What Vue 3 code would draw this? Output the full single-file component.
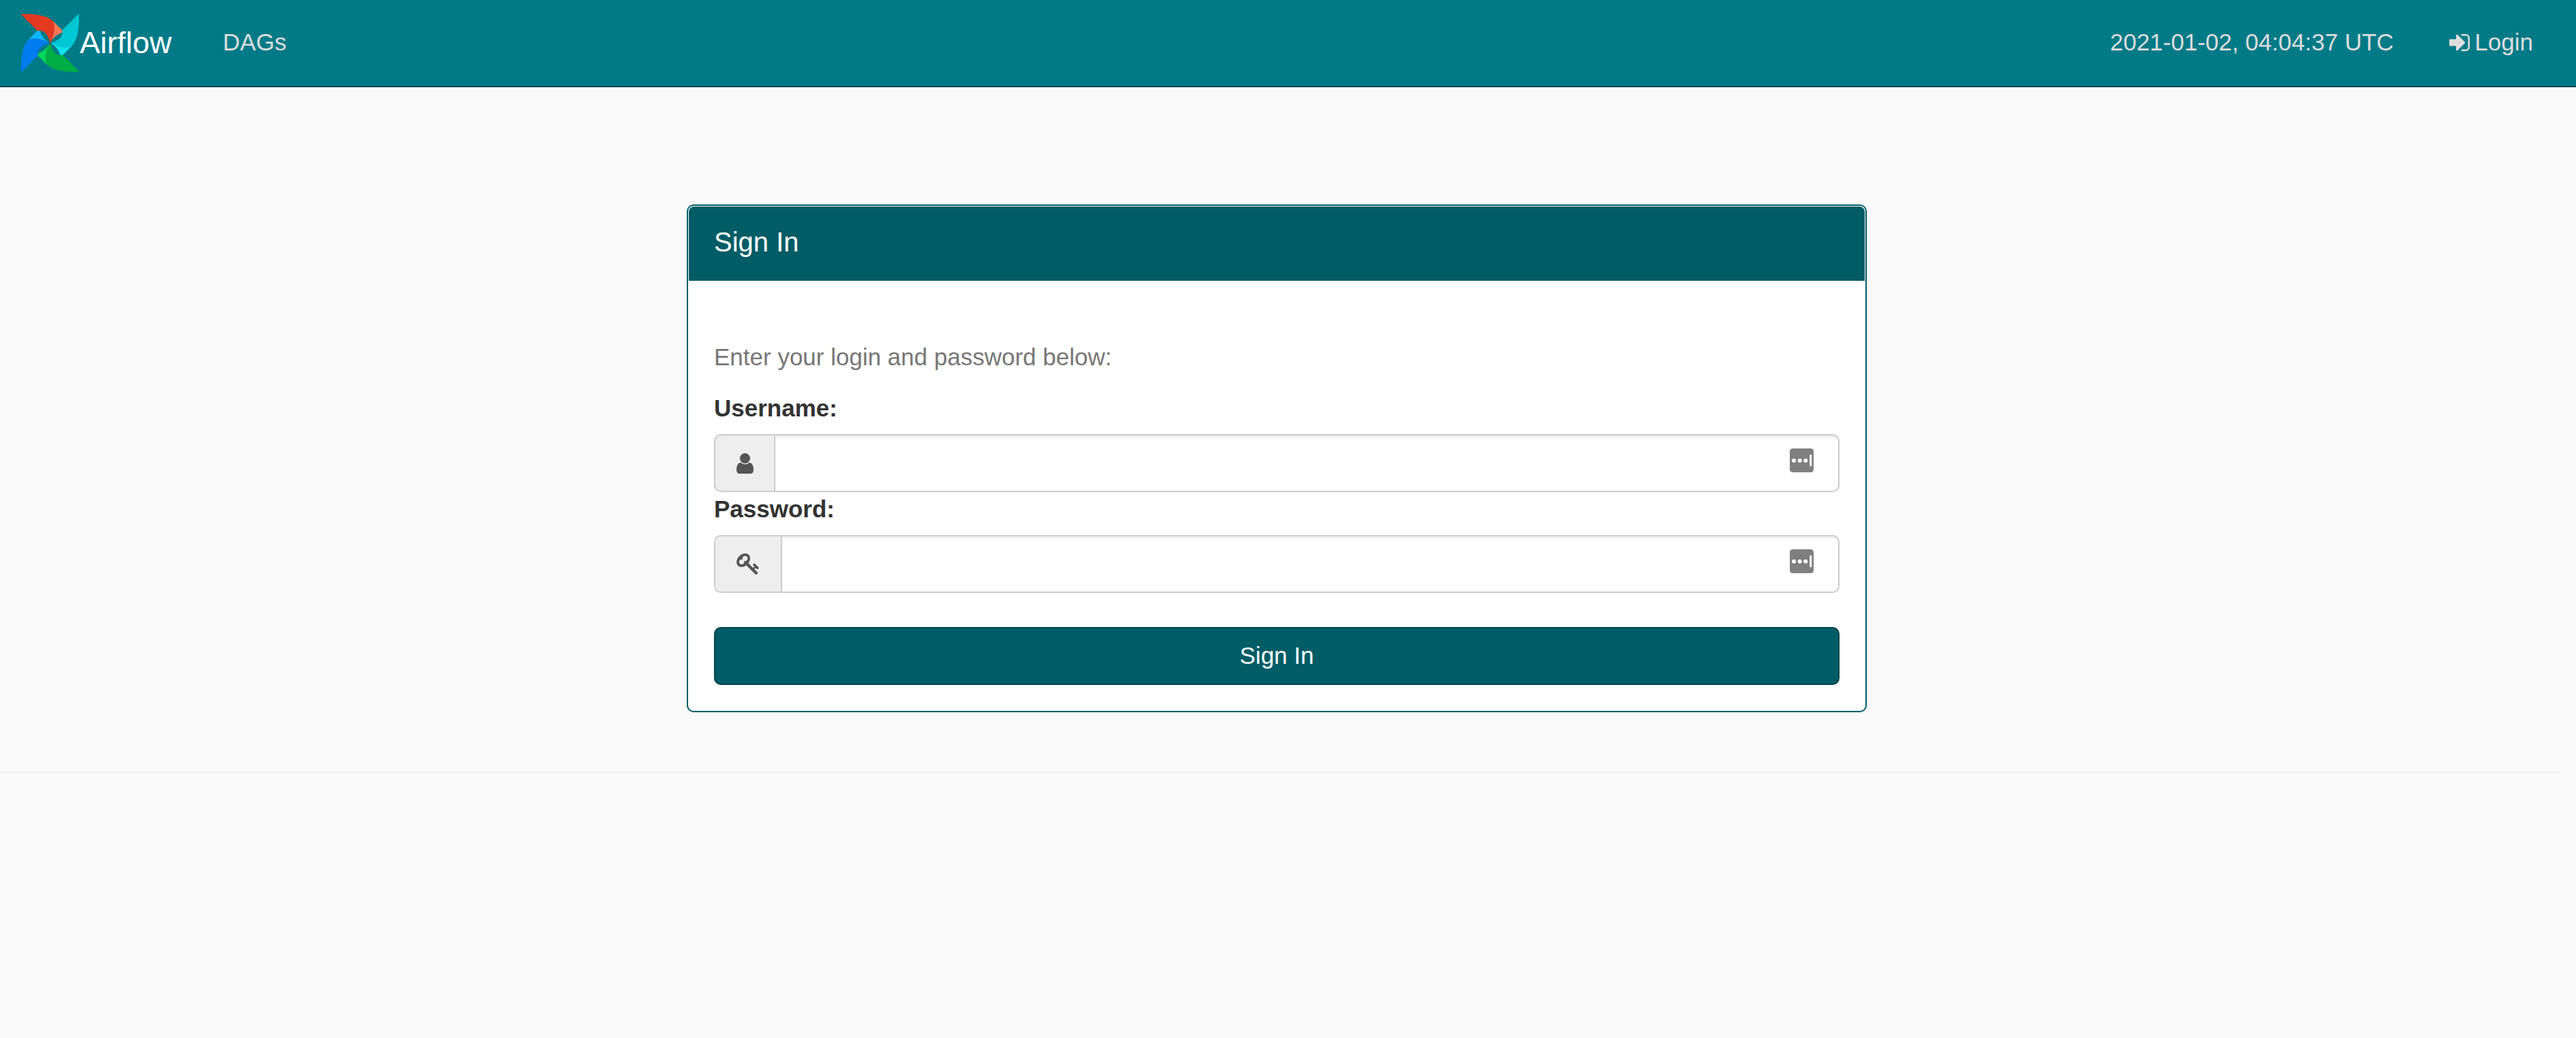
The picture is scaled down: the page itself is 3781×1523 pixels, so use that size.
<script setup>
import { ref } from 'vue'

const username = ref('')
const password = ref('')
const blades = [
  { angle: 0, main: '#e43921', tip: '#ff7557' },
  { angle: 90, main: '#00c7d4', tip: '#11e1ee' },
  { angle: 180, main: '#00ad46', tip: '#04d659' },
  { angle: 270, main: '#017cee', tip: '#0cb6ff' },
]
</script>

<template>
  <header class="navbar">
    <a class="brand" href="#">
      <svg class="logo" viewBox="93 63 255 257" aria-hidden="true">
        <g v-for="b in blades" :key="b.angle" :transform="`rotate(${b.angle} 220.5 191.5)`">
          <path :fill="b.main" d="M96 64C150 64 205 67 236 97C246 130 236 165 220.500 191.500C214 163 200 139 176 137Q170 136 166 139L94 67Q93 64 96 64Z" />
          <path :fill="b.tip" d="M233 95L272 134Q277 140 272 147C248 155 232 170 220.500 191.500C238 160 245 130 236 100Z" />
        </g>
        <circle cx="220.500" cy="191.500" r="5" fill="#51504f" />
      </svg>
      <span>Airflow</span>
    </a>
    <nav class="links">
      <a href="#">DAGs</a>
    </nav>
    <a class="clock" href="#">2021-01-02, 04:04:37 UTC</a>
    <a class="login" href="#">
      <svg class="login-icon" viewBox="0 256 1536 1280" aria-hidden="true">
        <path fill="currentColor" d="M1184 896q0 26-19 45l-544 544q-19 19-45 19t-45-19-19-45v-288h-448q-26 0-45-19t-19-45v-384q0-26 19-45t45-19h448v-288q0-26 19-45t45-19 45 19l544 544q19 19 19 45zm352-352v704q0 119-84.500 203.500t-203.500 84.500h-320q-13 0-22.500-9.500t-9.500-22.500q0-4-1-20t-.5-26.500 3-23.500 10-19.500 20.500-6.500h320q66 0 113-47t47-113v-704q0-66-47-113t-113-47h-312l-11.500-1-11.500-3-8-5.500-7-9-2-13.500q0-4-1-20t-.5-26.500 3-23.500 10-19.500 20.500-6.500h320q119 0 203.500 84.500t84.500 203.500z" />
      </svg>
      <span>Login</span>
    </a>
  </header>

  <main class="page">
    <section class="card">
      <h1 class="card-title">Sign In</h1>
      <form class="card-body" @submit.prevent>
        <p class="help">Enter your login and password below:</p>

        <label for="username">Username:</label>
        <div class="field">
          <span class="addon">
            <svg class="user-icon" viewBox="256 128 1280 1536" aria-hidden="true">
              <path fill="currentColor" d="M1536 1399q0 109-62.500 187t-150.500 78h-854q-88 0-150.500-78t-62.500-187q0-85 8.500-160.500t31.500-152 58.500-131 94-89 134.500-34.500q131 128 313 128t313-128q76 0 134.500 34.500t94 89 58.500 131 31.500 152 8.500 160.500zm-256-887q0 159-112.500 271.500t-271.500 112.500-271.500-112.500-112.500-271.500 112.500-271.500 271.500-112.500 271.500 112.500 112.500 271.500z" />
            </svg>
          </span>
          <input id="username" v-model="username" type="text" />
          <svg class="filler" viewBox="0 0 105 105" aria-hidden="true">
            <rect width="105" height="105" rx="13" fill="#7f7f7f" />
            <g fill="#fff">
              <circle cx="18" cy="53" r="9" />
              <circle cx="44" cy="53" r="9" />
              <circle cx="70" cy="53" r="9" />
              <rect x="87" y="26" width="10" height="53" rx="4" fill="#eee" />
            </g>
          </svg>
        </div>

        <label for="password">Password:</label>
        <div class="field">
          <span class="addon">
            <svg class="key-icon" viewBox="0 128 1683 1592" aria-hidden="true">
              <path fill="currentColor" d="M832 512q0-80-56-136t-136-56-136 56-56 136q0 42 19 83-41-19-83-19-80 0-136 56t-56 136 56 136 136 56 136-56 56-136q0-42-19-83 41 19 83 19 80 0 136-56t56-136zm851 704q0 17-49 66t-66 49q-9 0-28.500-16t-36.500-33-38.500-40-24.500-26l-96 96 220 220q28 28 28 68 0 42-39 81t-81 39q-40 0-68-28l-671-671q-176 131-365 131-163 0-265.500-102.500t-102.500-265.500q0-160 95-313t248-248 313-95q163 0 265.500 102.500t102.500 265.500q0 189-131 365l355 355 96-96q-3-3-26-24.500t-40-38.500-33-36.500-16-28.500q0-17 49-66t66-49q13 0 23 10 6 6 46 44.500t82 79.500 86.500 86 73 78 28.500 41z" />
            </svg>
          </span>
          <input id="password" v-model="password" type="password" />
          <svg class="filler" viewBox="0 0 105 105" aria-hidden="true">
            <rect width="105" height="105" rx="13" fill="#7f7f7f" />
            <g fill="#fff">
              <circle cx="18" cy="53" r="9" />
              <circle cx="44" cy="53" r="9" />
              <circle cx="70" cy="53" r="9" />
              <rect x="87" y="26" width="10" height="53" rx="4" fill="#eee" />
            </g>
          </svg>
        </div>

        <button class="submit" type="submit">Sign In</button>
      </form>
    </section>
    <hr class="rule" />
  </main>
</template>

<style>
body {
  margin: 0;
  background: #fafafa;
  color: #333;
  font: 35px/50px "Liberation Sans", Arial, sans-serif;
}
</style>

<style scoped>
.navbar {
  display: flex;
  align-items: center;
  box-sizing: border-box;
  height: 128px;
  padding: 0 63px 0 31px;
  background: #007a87;
  border-bottom: 2px solid #00474f;
}
.navbar a {
  color: #ddd;
  text-decoration: none;
}
.navbar .brand {
  display: flex;
  align-items: center;
  gap: 1px;
  color: #fff;
  font-size: 45px;
}
.logo {
  width: 85px;
  height: 86px;
}
.links,
.clock,
.login {
  padding-bottom: 2px;
}
.links {
  margin-left: 75px;
}
.clock {
  margin-left: auto;
}
.login {
  display: flex;
  align-items: center;
  gap: 7px;
  margin-left: 82px;
}
.login-icon {
  width: 30px;
  height: 25px;
}
.page {
  padding: 172px 25px 0 0;
}
.card {
  box-sizing: border-box;
  width: calc(100% - 50px);
  max-width: 1732px;
  margin: 0 auto;
  padding-top: 1px;
  position: relative;
  right: 4px;
  background: #fff;
  border: 2px solid #005c66;
  border-radius: 10px;
  box-shadow: 0 2px 3px rgba(0, 0, 0, 0.05);
}
.card-title {
  margin: 0 1px;
  padding: 24px 37px 28px;
  background: #005c66;
  border-radius: 8px 8px 0 0;
  color: #fff;
  font-size: 40px;
  font-weight: 400;
  line-height: 57px;
}
.card-body {
  padding: 87px 38px 38px;
}
.help {
  margin: 0 0 25px;
  color: #777;
}
label {
  display: block;
  margin-bottom: 13px;
  font-weight: 700;
}
.field {
  display: flex;
  position: relative;
  height: 85px;
}
.addon {
  display: flex;
  align-items: center;
  padding: 0 30px 0 31px;
  background: #eee;
  border: 2px solid #ccc;
  border-right: 0;
  border-radius: 10px 0 0 10px;
  color: #555;
}
.user-icon {
  width: 25px;
  height: 30px;
}
.key-icon {
  width: 33px;
  height: 31px;
  margin-right: 2px;
}
.field input {
  flex: 1;
  min-width: 0;
  box-sizing: border-box;
  padding: 0 80px 0 30px;
  border: 2px solid #ccc;
  border-radius: 0 10px 10px 0;
  background: #fff;
  box-shadow: inset 0 3px 3px rgba(0, 0, 0, 0.075);
  color: #555;
  font: inherit;
  outline: 0;
}
.filler {
  position: absolute;
  top: 21px;
  right: 38px;
  width: 35px;
  height: 35px;
}
.submit {
  display: block;
  width: 100%;
  height: 85px;
  margin-top: 50px;
  padding: 0 0 2px;
  border: 2px solid #00434a;
  border-radius: 10px;
  background: #005c66;
  color: #fff;
  font: inherit;
  cursor: pointer;
}
.rule {
  margin: 87px 0 50px;
  border: 0;
  border-top: 2px solid #eee;
}
</style>
